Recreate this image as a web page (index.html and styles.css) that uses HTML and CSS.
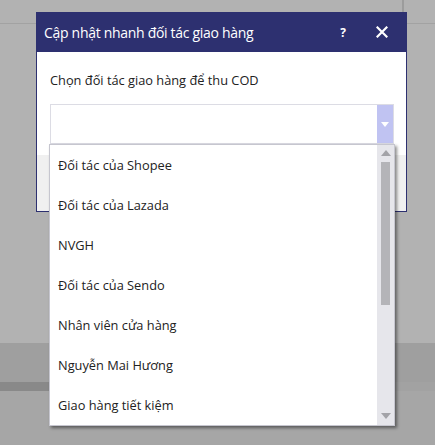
FILE: index.html
```html
<!DOCTYPE html>
<html lang="vi">
<head>
<meta charset="utf-8">
<link rel="stylesheet" href="styles.css">
</head>
<body>
<div class="page">
  <div class="topbar"><div class="topdiv"></div></div>
  <div class="spacer"></div>
  <div class="band"></div>
  <div class="bar"><div class="bar-left"></div><div class="bar-right"></div></div>
  <div class="rest"></div>

  <div class="dialog">
    <div class="dlg-head">
      <span class="dlg-title">Cập nhật nhanh đối tác giao hàng</span>
      <span class="dlg-help">?</span>
      <svg class="dlg-close" width="12" height="12" viewBox="0 0 12 12"><path d="M1.5 1.5L10.5 10.5M10.5 1.5L1.5 10.5" stroke="#fff" stroke-width="2.2" stroke-linecap="square"/></svg>
    </div>
    <div class="dlg-body">
      <div class="label">Chọn đối tác giao hàng để thu COD</div>
      <div class="select">
        <div class="select-val"></div>
        <div class="select-btn"><svg width="8" height="5" viewBox="0 0 8 5"><path d="M0 0H8L4 5Z" fill="#fff"/></svg></div>
      </div>
    </div>
    <div class="dlg-foot"></div>
  </div>

  <div class="dropdown">
    <ul class="list">
      <li>Đối tác của Shopee</li>
      <li>Đối tác của Lazada</li>
      <li>NVGH</li>
      <li>Đối tác của Sendo</li>
      <li>Nhân viên cửa hàng</li>
      <li>Nguyễn Mai Hương</li>
      <li>Giao hàng tiết kiệm</li>
    </ul>
    <div class="scroll">
      <svg class="arr" width="10" height="6" viewBox="0 0 10 6"><path d="M0 6H10L5 0Z" fill="#a3a3a8"/></svg>
      <div class="track"><div class="thumb"></div></div>
      <svg class="arr" width="10" height="6" viewBox="0 0 10 6"><path d="M0 0H10L5 6Z" fill="#a3a3a8"/></svg>
    </div>
  </div>
</div>
</body>
</html>
```
FILE: styles.css
```css
html, body {
  margin: 0;
  padding: 0;
}
body {
  width: 435px;
  height: 445px;
  overflow: hidden;
  background: #b2b2b2;
  font-family: "Open Sans", "Noto Sans", sans-serif;
}
.page {
  position: relative;
  width: 435px;
  height: 445px;
}
.topbar {
  height: 23px;
  border-bottom: 1px solid #a2a2a2;
  position: relative;
}
.topdiv {
  position: absolute;
  left: 402px;
  top: 0;
  width: 2px;
  height: 12px;
  background: #9c9c9c;
}
.spacer { height: 319px; }
.band { height: 39px; background: #9f9f9f; }
.bar { height: 9px; display: flex; }
.bar-left { width: 60px; background: #898989; }
.bar-right { flex: 1; background: #a2a2a2; }
.rest { height: 54px; background: #a6a6a6; }

.dialog {
  position: absolute;
  left: 36px;
  top: 12px;
  width: 371px;
  display: flex;
  flex-direction: column;
}
.dlg-head {
  height: 40px;
  background: #2d3070;
  display: flex;
  align-items: center;
  padding: 0 19px 0 8px;
  color: #fff;
}
.dlg-title {
  font-size: 14px;
  flex: 1;
  letter-spacing: -0.3px;
}
.dlg-help {
  font-size: 12px;
  font-weight: bold;
  margin-right: 30px;
}
.dlg-body {
  background: #fff;
  border-left: 1px solid #2d3070;
  border-right: 1px solid #2d3070;
  padding: 18px 12px 11px 13px;
}
.label {
  font-size: 12.8px;
  color: #222;
  line-height: 20px;
}
.select {
  margin-top: 14px;
  height: 38px;
  border: 1px solid #dcdce4;
  display: flex;
}
.select-val { flex: 1; }
.select-btn {
  width: 16px;
  background: #c0c3f2;
  display: flex;
  align-items: center;
  justify-content: center;
}
.dlg-foot {
  height: 56px;
  background: #f0f0f0;
  border: 1px solid #2d3070;
  border-top: none;
}

.dropdown {
  position: absolute;
  left: 49px;
  top: 144px;
  width: 344px;
  height: 280px;
  border: 1px solid #c6c6cf;
  background: #fff;
  box-shadow: 2px 2px 3px rgba(0,0,0,0.45);
  display: flex;
}
.list {
  list-style: none;
  margin: 0;
  padding: 0;
  flex: 1;
}
.list li {
  height: 40px;
  line-height: 40px;
  padding-left: 8px;
  font-size: 12.8px;
  color: #222;
}
.scroll {
  width: 17px;
  background: #e6e6eb;
  display: flex;
  flex-direction: column;
  align-items: center;
  padding: 5px 0 6px;
  box-sizing: border-box;
}
.arr { flex: none; }
.track {
  flex: 1;
  width: 100%;
  padding: 6px 0 0;
  box-sizing: border-box;
}
.thumb {
  width: 9px;
  margin: 0 auto;
  height: 143px;
  background: #b4b4b8;
}
```
